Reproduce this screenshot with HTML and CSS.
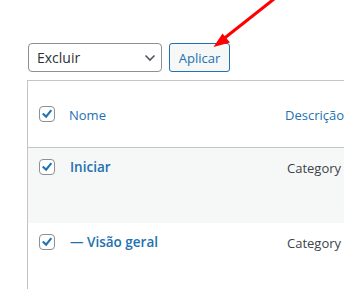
FILE: index.html
```html
<!DOCTYPE html>
<html lang="pt">
<head>
<meta charset="utf-8">
<title>Categorias</title>
<link rel="stylesheet" href="styles.css">
</head>
<body>
<div class="page">
  <div class="bulk">
    <div class="select">
      <span class="select-label">Excluir</span>
      <svg class="chev" width="14" height="14" viewBox="0 0 14 14"><path d="M2.5 4.5 L7 9 L11.5 4.5" fill="none" stroke="#50575e" stroke-width="1.6"/></svg>
    </div>
    <button class="btn">Aplicar</button>
  </div>
  <div class="table">
    <div class="thead">
      <div class="col-cb"><span class="cb"><svg viewBox="0 0 16 16" width="16" height="16"><path d="M4 8.2 L7 11 L12.2 4.6" fill="none" stroke="#2271b1" stroke-width="2.4" stroke-linecap="square"/></svg></span></div>
      <div class="col-name"><a class="head-link">Nome</a></div>
      <div class="col-desc"><a class="head-link">Descrição</a></div>
    </div>
    <div class="row alt">
      <div class="col-cb"><span class="cb"><svg viewBox="0 0 16 16" width="16" height="16"><path d="M4 8.2 L7 11 L12.2 4.6" fill="none" stroke="#2271b1" stroke-width="2.4" stroke-linecap="square"/></svg></span></div>
      <div class="col-name"><a class="row-title">Iniciar</a></div>
      <div class="col-desc"><span class="desc">Category</span></div>
    </div>
    <div class="row">
      <div class="col-cb"><span class="cb"><svg viewBox="0 0 16 16" width="16" height="16"><path d="M4 8.2 L7 11 L12.2 4.6" fill="none" stroke="#2271b1" stroke-width="2.4" stroke-linecap="square"/></svg></span></div>
      <div class="col-name"><a class="row-title">— Visão geral</a></div>
      <div class="col-desc"><span class="desc">Category</span></div>
    </div>
  </div>
  <svg class="arrow" width="344" height="60" viewBox="0 0 344 60">
    <line x1="274" y1="-1" x2="224" y2="38.5" stroke="#f00" stroke-width="3"/>
    <polygon points="213.5,47 222.5,33.5 230,42.5" fill="#f00"/>
  </svg>
</div>
</body>
</html>
```

FILE: styles.css
```css
html, body {
  margin: 0;
  padding: 0;
  background: #ffffff;
  overflow: hidden;
}
body {
  font-family: "Open Sans", "Noto Sans", sans-serif;
  color: #3c434a;
  width: 344px;
  height: 289px;
}
.page {
  position: relative;
  padding-top: 43px;
}
.bulk {
  display: flex;
  gap: 7px;
  padding-left: 28px;
  height: 29px;
}
.select {
  box-sizing: border-box;
  width: 134px;
  height: 29px;
  border: 1px solid #8c8f94;
  border-radius: 4px;
  display: flex;
  align-items: center;
  justify-content: space-between;
  padding: 0 4px 0 8px;
  font-size: 14px;
  color: #2c3338;
}
.chev {
  margin-top: 1px;
}
.btn {
  box-sizing: border-box;
  width: 61px;
  height: 29px;
  border: 1px solid #2271b1;
  border-radius: 3px;
  background: #f6f7f7;
  color: #2271b1;
  font-family: inherit;
  font-size: 13px;
  padding: 0;
}
.table {
  margin-top: 8px;
  margin-left: 27px;
  width: 317px;
  box-sizing: border-box;
  border: 1px solid #c3c4c7;
  border-right: none;
  border-bottom: none;
  height: 209px;
  overflow: hidden;
}
.thead {
  display: flex;
  align-items: center;
  height: 66px;
  border-bottom: 1px solid #c3c4c7;
}
.row {
  display: flex;
  align-items: flex-start;
  height: 75px;
  padding-top: 11px;
  box-sizing: border-box;
}
.row.alt {
  background: #f6f7f7;
}
.col-cb {
  flex: none;
  width: 41px;
  padding-left: 11px;
  box-sizing: border-box;
  display: flex;
}
.col-name {
  flex: none;
  width: 216px;
}
.col-desc {
  flex: none;
  white-space: nowrap;
}
.cb {
  box-sizing: border-box;
  width: 16px;
  height: 16px;
  border: 1px solid #8c8f94;
  border-radius: 4px;
  background: #fff;
  display: flex;
  align-items: center;
  justify-content: center;
}
.cb svg {
  display: block;
  width: 14px;
  height: 14px;
}
.head-link {
  color: #2271b1;
  font-size: 13px;
}
.row-title {
  color: #2271b1;
  font-size: 13.5px;
  font-weight: 600;
  line-height: 16px;
  display: block;
}
.row .col-name {
  padding-left: 1px;
  box-sizing: border-box;
}
.desc {
  font-size: 13px;
  line-height: 18px;
  display: block;
  padding-left: 2px;
}
.arrow {
  position: absolute;
  left: 0;
  top: 0;
}
```
